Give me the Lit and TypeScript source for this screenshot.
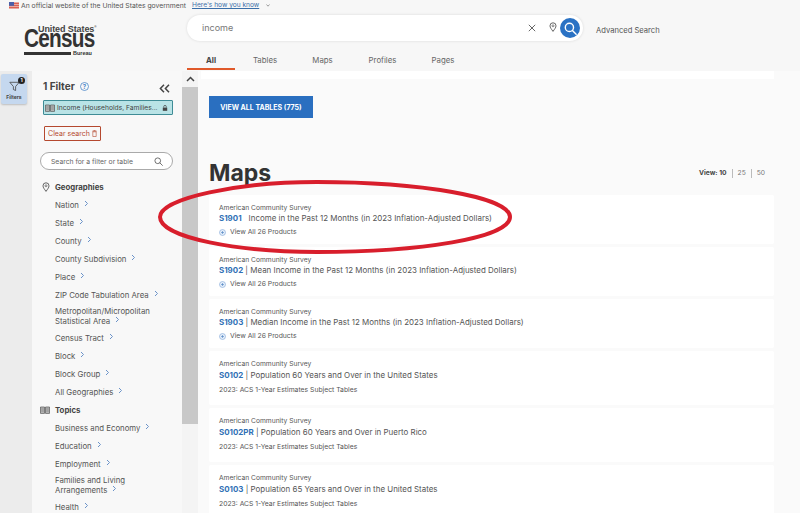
import { css, html, LitElement, svg } from 'lit';
import { customElement } from 'lit/decorators.js';

const chevron = html`<svg class="chev" width="5" height="7" viewBox="0 0 5 7"><path d="M1 1l2.5 2.5L1 6" fill="none" stroke="#6b93c9" stroke-width="1"/></svg>`;

const geographies = [
  'Nation', 'State', 'County', 'County Subdivision', 'Place', 'ZIP Code Tabulation Area',
  'Metropolitan/Micropolitan Statistical Area', 'Census Tract', 'Block', 'Block Group', 'All Geographies',
];
const topics = ['Business and Economy', 'Education', 'Employment', 'Families and Living Arrangements', 'Health'];
const twoLine = new Set(['Metropolitan/Micropolitan Statistical Area', 'Families and Living Arrangements']);

const results = [
  { code: 'S1901', title: 'Income in the Past 12 Months (in 2023 Inflation-Adjusted Dollars)', products: true, pipe: false },
  { code: 'S1902', title: 'Mean Income in the Past 12 Months (in 2023 Inflation-Adjusted Dollars)', products: true, pipe: true },
  { code: 'S1903', title: 'Median Income in the Past 12 Months (in 2023 Inflation-Adjusted Dollars)', products: true, pipe: true },
  { code: 'S0102', title: 'Population 60 Years and Over in the United States', products: false, pipe: true },
  { code: 'S0102PR', title: 'Population 60 Years and Over in Puerto Rico', products: false, pipe: true },
  { code: 'S0103', title: 'Population 65 Years and Over in the United States', products: false, pipe: true },
];

@customElement('app-root')
export class AppRoot extends LitElement {
  static get styles() {
    return css`
      :host {
        display: block;
        width: 800px;
        height: 513px;
        position: relative;
        overflow: hidden;
        background: #f7f7f7;
        font-family: Inter, "Liberation Sans", sans-serif;
        color: #444;
      }
      svg { display: block; flex: none; }

      .banner {
        height: 10px;
        display: flex;
        align-items: center;
        gap: 2px;
        padding-left: 9px;
        font-size: 6.8px;
        color: #555;
        white-space: nowrap;
      }
      .banner a { color: #3a6ea8; text-decoration: underline; margin-left: 4px; font-size: 6.6px; }
      .banner .caret { margin-left: 5px; }

      .header { height: 61px; display: flex; }
      .logo { width: 187px; flex: none; padding: 15px 0 0 24px; box-sizing: border-box; }
      .logo-box { width: 75px; height: 30px; color: #333; font-family: "Liberation Sans", sans-serif; font-weight: 700; }
      .logo-top { font-size: 9px; line-height: 8px; padding-left: 14px; white-space: nowrap; letter-spacing: -0.1px; color: #444; }
      .logo-top sup { font-size: 3px; line-height: 0; }
      .logo-main { font-size: 25px; line-height: 20px; letter-spacing: -0.9px; margin-top: -5px; transform: scaleX(.83); transform-origin: left center; }
      .logo-foot { display: flex; align-items: center; gap: 2px; font-size: 5.5px; line-height: 6px; margin-top: 2px; }
      .logo-bar { width: 47px; height: 3px; background: #333; }

      .head-main { flex: 1; }
      .search-row { display: flex; align-items: center; }
      .search {
        width: 396px;
        height: 26px;
        margin-top: 5px;
        box-sizing: border-box;
        border-radius: 13px;
        background: #fff;
        box-shadow: 0 0 3px rgba(0,0,0,.12);
        display: flex;
        align-items: center;
        padding: 0 3px 0 15px;
        font-size: 9px;
        color: #777;
      }
      .search .q { flex: 1; margin-top: -1px; }
      .search .x { margin-right: 13px; }
      .search .pin { margin-right: 3px; margin-top: -3px; }
      .go { width: 20px; height: 20px; border-radius: 50%; background: #2a72c4; display: flex; align-items: center; justify-content: center; }
      .adv { font-size: 7.6px; color: #555; margin: 9px 0 0 13px; white-space: nowrap; }
      .tabs { display: flex; margin-top: 13px; font-size: 7.8px; color: #666; }
      .tab { height: 14px; line-height: 12px; text-align: center; }
      .tab.on { font-weight: 700; color: #444; border-bottom: 2px solid #e0592a; }

      .body { display: flex; height: 442px; }
      .rail { width: 32px; flex: none; background: #ececec; padding-top: 3px; box-sizing: border-box; }
      .filters-btn {
        position: relative;
        width: 26px;
        height: 30px;
        margin-left: 1px;
        border-radius: 2px;
        background: #c5d8ef;
        box-shadow: 0 1px 2px rgba(0,0,0,.2);
        font-size: 5px;
        font-weight: 700;
        color: #444;
        text-align: center;
        padding-top: 7px;
        box-sizing: border-box;
      }
      .filters-btn svg { margin: 0 auto 2px; }
      .badge {
        position: absolute;
        top: 3px;
        right: 2px;
        width: 7px;
        height: 7px;
        border-radius: 50%;
        background: #222;
        color: #fff;
        font-size: 5px;
        line-height: 7px;
      }

      .side { width: 150px; flex: none; background: #f8f8f8; padding: 9px 0 0 11px; box-sizing: border-box; overflow: hidden; }
      .side-head { display: flex; align-items: center; font-size: 10px; font-weight: 700; color: #444; height: 12px; }
      .side-head .help { margin-left: 5px; }
      .side-head .collapse { margin-left: 70px; margin-top: 4px; }
      .chip {
        width: 130px;
        height: 15px;
        margin-top: 8px;
        box-sizing: border-box;
        background: #b9e3e6;
        border: 1px solid #3f8c96;
        border-radius: 1px;
        display: flex;
        align-items: center;
        gap: 2px;
        font-size: 6.7px;
        color: #444;
        white-space: nowrap;
        padding: 0 4px 0 1px;
      }
      .chip .lock { margin-left: auto; }
      .clear {
        width: 57px;
        height: 15px;
        margin: 11px 0 0 1px;
        box-sizing: border-box;
        border: 1px solid #b5492f;
        border-radius: 1px;
        color: #b5492f;
        font-size: 7px;
        display: flex;
        align-items: center;
        justify-content: center;
        gap: 2px;
        white-space: nowrap;
      }
      .find {
        width: 133px;
        height: 18px;
        margin: 11px 0 0 -3px;
        box-sizing: border-box;
        border: 1px solid #aaa;
        border-radius: 9px;
        background: #fff;
        display: flex;
        align-items: center;
        justify-content: space-between;
        padding: 0 9px 0 10px;
        font-size: 6.8px;
        color: #666;
      }
      .group { display: flex; align-items: center; height: 10px; margin: 12px 0 0 -1px; font-size: 7.8px; font-weight: 700; color: #444; gap: 5px; }
      .group.topics { margin-top: 8px; margin-left: -3px; }
      .items { list-style: none; margin: 0; padding: 0 0 0 12px; }
      .items li { font-size: 7.8px; line-height: 10px; color: #555; margin-top: 8px; width: 115px; }
      .items li.two { margin-top: 6px; margin-bottom: -1px; }
      .chev { display: inline-block; margin-left: 5px; vertical-align: 1px; }

      .scroll { width: 16px; flex: none; background: #f4f4f4; display: flex; flex-direction: column; }
      .scroll .up { height: 16px; display: flex; align-items: center; justify-content: center; }
      .scroll .thumb { height: 337px; background: #c8c8c8; }

      .main { flex: 1; background: #fafafa; min-width: 0; }
      .strip { height: 8px; background: #fff; margin: 0 26px 0 3px; }
      .inner { padding: 0 26px 0 11px; }
      .view-all {
        width: 104px;
        height: 22px;
        margin-top: 17px;
        background: #2a6fc0;
        color: #fff;
        font-size: 7px;
        font-weight: 700;
        display: flex;
        align-items: center;
        justify-content: center;
      }
      .title-row { display: flex; align-items: flex-end; justify-content: space-between; margin-top: 34px; height: 36px; }
      h2 { margin: 0; font-size: 23px; line-height: 30px; font-weight: 700; color: #333; }
      .view { font-size: 6.7px; color: #777; display: flex; gap: 5px; margin: 0 9px 10px 0; }
      .view b { color: #444; }
      .view i { width: 1px; height: 9px; background: #bbb; }
      .list { margin-top: 7px; display: flex; flex-direction: column; gap: 3px; }
      .card {
        height: 54px;
        background: #fff;
        box-sizing: border-box;
        padding: 8px 10px 0;
        border-radius: 2px;
      }
      .card.short { height: 49px; }
      .survey { font-size: 6.7px; line-height: 10px; color: #555; }
      .line { font-size: 7.95px; line-height: 12px; color: #555; white-space: nowrap; }
      .card.short .line { margin-top: -1px; }
      .code { font-weight: 700; color: #2f6fb5; }
      .gap { display: inline-block; width: 7px; }
      .sub { display: flex; align-items: center; gap: 4px; font-size: 6.8px; line-height: 10px; color: #555; margin-top: 3px; }
      .sub.plain { margin-top: 4px; }

      .circle { position: absolute; left: 0; top: 0; pointer-events: none; }
    `;
  }

  private mag(color: string, size: number, width: number) {
    return html`<svg width=${size} height=${size} viewBox="0 0 12 12"><circle cx="5" cy="5" r="3.8" fill="none" stroke=${color} stroke-width=${width}/><path d="M8 8l3.2 3.2" stroke=${color} stroke-width=${width} stroke-linecap="round"/></svg>`;
  }

  private pin(size: number) {
    return html`<svg class="pin" width=${size} height=${size * 1.25} viewBox="0 0 8 10"><path d="M4 9.4C2.4 7 1 5.6 1 3.8a3 3 0 0 1 6 0C7 5.6 5.6 7 4 9.4z" fill="none" stroke="#555" stroke-width=".9"/><circle cx="4" cy="3.8" r="1" fill="none" stroke="#555" stroke-width=".7"/></svg>`;
  }

  private book(width: number) {
    return html`<svg width=${width} height=${width * 0.8} viewBox="0 0 10 8"><path d="M.5 1h4v6.4h-4zM5.5 1h4v6.4h-4z" fill="#bbb" stroke="#555" stroke-width=".7"/><path d="M1.2 3h2.6M1.2 5h2.6M6.2 3h2.6M6.2 5h2.6" stroke="#555" stroke-width=".5"/></svg>`;
  }

  private renderLogo() {
    return html`<div class="logo"><div class="logo-box">
      <div class="logo-top">United States<sup>®</sup></div>
      <div class="logo-main">Census</div>
      <div class="logo-foot"><span class="logo-bar"></span>Bureau</div>
    </div></div>`;
  }

  private renderHeader() {
    const tabs = [['All', 48, true], ['Tables', 60], ['Maps', 55], ['Profiles', 65], ['Pages', 56]];
    return html`
      <div class="banner">
        <svg width="10" height="7" viewBox="0 0 10 7"><rect width="10" height="7" fill="#e8a9a0"/><path d="M0 1.5h10M0 3.5h10M0 5.5h10" stroke="#d9584a" stroke-width=".9"/><rect width="5" height="3.8" fill="#4a5fa8"/></svg>
        <span>An official website of the United States government</span>
        <a>Here's how you know</a>
        <svg class="caret" width="4" height="3" viewBox="0 0 4 3"><path d="M.5.5L2 2.2 3.5.5" fill="none" stroke="#777" stroke-width=".7"/></svg>
      </div>
      <div class="header">
        ${this.renderLogo()}
        <div class="head-main">
          <div class="search-row">
            <div class="search">
              <span class="q">income</span>
              <svg class="x" width="8" height="8" viewBox="0 0 8 8"><path d="M.8.8l6.4 6.4M7.2.8L.8 7.2" stroke="#555" stroke-width=".9"/></svg>
              ${this.pin(8)}
              <div class="go">${this.mag('#fff', 13, 1.3)}</div>
            </div>
            <div class="adv">Advanced Search</div>
          </div>
          <div class="tabs">
            ${tabs.map(([name, w, on]) => html`<div class="tab ${on ? 'on' : ''}" style="width:${w}px">${name}</div>`)}
          </div>
        </div>
      </div>`;
  }

  private renderItem(label: string) {
    return html`<li class=${twoLine.has(label) ? 'two' : ''}>${label}${chevron}</li>`;
  }

  private renderSide() {
    return html`
      <div class="side">
        <div class="side-head">
          1 Filter
          <svg class="help" width="9" height="9" viewBox="0 0 9 9"><circle cx="4.5" cy="4.5" r="4" fill="none" stroke="#4a86c8" stroke-width=".8"/><text x="4.5" y="6.5" font-size="6" text-anchor="middle" fill="#4a86c8">?</text></svg>
          <svg class="collapse" width="11" height="9" viewBox="0 0 11 9"><path d="M5 .8L1.4 4.5 5 8.2M10 .8L6.4 4.5 10 8.2" fill="none" stroke="#444" stroke-width="1.5"/></svg>
        </div>
        <div class="chip">
          ${this.book(10)}
          <span>Income (Households, Families...</span>
          <svg class="lock" width="6" height="6" viewBox="0 0 6 6"><rect x=".8" y="2.6" width="4.4" height="3.2" fill="#444"/><path d="M1.7 2.6V1.7a1.3 1.3 0 0 1 2.6 0v.9" fill="none" stroke="#444" stroke-width=".7"/></svg>
        </div>
        <div class="clear">Clear search
          <svg width="5" height="7" viewBox="0 0 5 7"><path d="M.8 1.8h3.4v4.7H.8zM.2 1.2h4.6M1.8 1V.4h1.4V1" fill="none" stroke="#b5492f" stroke-width=".6"/></svg>
        </div>
        <div class="find"><span>Search for a filter or table</span>${this.mag('#555', 9, 1.1)}</div>
        <div class="group">${this.pin(8)}Geographies</div>
        <ul class="items">${geographies.map((g) => this.renderItem(g))}</ul>
        <div class="group topics">${this.book(10)}Topics</div>
        <ul class="items">${topics.map((t) => this.renderItem(t))}</ul>
      </div>`;
  }

  private renderCard(r: (typeof results)[number]) {
    const sep = r.pipe ? html` | ` : html`<span class="gap"></span>`;
    return html`
      <div class="card ${r.products ? 'short' : ''}">
        <div class="survey">American Community Survey</div>
        <div class="line"><span class="code">${r.code}</span>${sep}${r.title}</div>
        ${r.products
          ? html`<div class="sub"><svg width="7" height="7" viewBox="0 0 7 7"><circle cx="3.5" cy="3.5" r="3" fill="#e4eefa" stroke="#7fa6d6" stroke-width=".6"/><path d="M2 3.5h3M3.5 2v3" stroke="#4a7fc0" stroke-width=".6"/></svg>View All 26 Products</div>`
          : html`<div class="sub plain">2023: ACS 1-Year Estimates Subject Tables</div>`}
      </div>`;
  }

  render() {
    return html`
      ${this.renderHeader()}
      <div class="body">
        <div class="rail">
          <div class="filters-btn">
            <span class="badge">1</span>
            <svg width="11" height="11" viewBox="0 0 11 10"><path d="M.8.8h9.4L6.6 5v4L4.4 8V5z" fill="none" stroke="#444" stroke-width=".8"/></svg>
            Filters
          </div>
        </div>
        ${this.renderSide()}
        <div class="scroll">
          <div class="up"><svg width="9" height="6" viewBox="0 0 9 6"><path d="M1 5l3.5-3.5L8 5" fill="none" stroke="#444" stroke-width="1.5"/></svg></div>
          <div class="thumb"></div>
        </div>
        <div class="main">
          <div class="strip"></div>
          <div class="inner">
            <div class="view-all">VIEW ALL TABLES (775)</div>
            <div class="title-row">
              <h2>Maps</h2>
              <div class="view"><b>View: 10</b><i></i><span>25</span><i></i><span>50</span></div>
            </div>
            <div class="list">${results.map((r) => this.renderCard(r))}</div>
          </div>
        </div>
      </div>
      <svg class="circle" width="800" height="513" viewBox="0 0 800 513">
        ${svg`<path d="M317 182C240 182 160 198 160 217C160 238 240 252 317 252C420 252 510 238 510 217C510 197 420 182 317 182Z" fill="none" stroke="#d81e2c" stroke-width="4"/>`}
      </svg>
    `;
  }
}
